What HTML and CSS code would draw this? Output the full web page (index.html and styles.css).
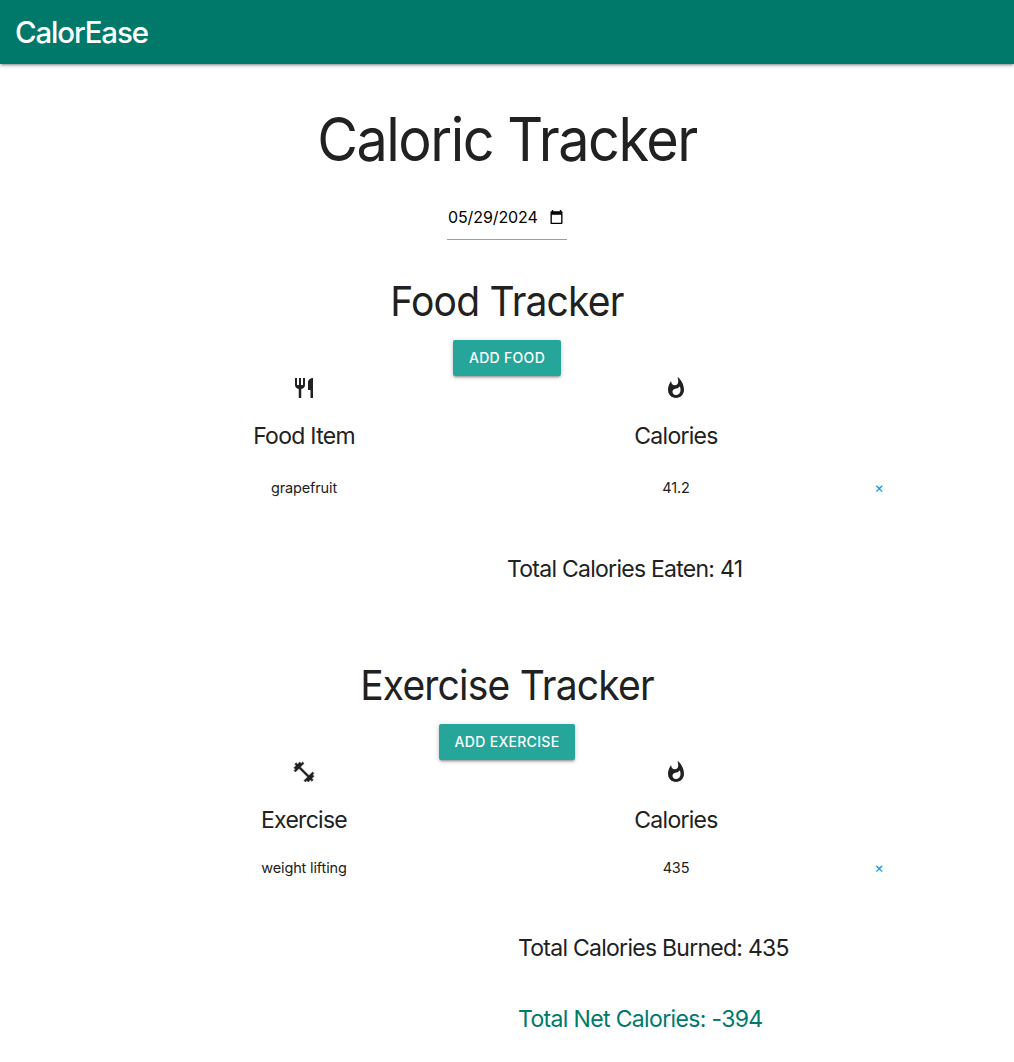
FILE: index.html
```html
<!DOCTYPE html>
<html lang="en">
<head>
<meta charset="utf-8">
<title>CalorEase</title>
<link rel="stylesheet" href="styles.css">
</head>
<body>
<nav class="navbar"><a class="brand">CalorEase</a></nav>
<main class="container">
  <h1 class="title">Caloric Tracker</h1>
  <div class="date"><span>05/29/2024</span>
    <svg class="calendar" viewBox="3 1 18 21"><path fill="currentColor" d="M20 3h-1V1h-2v2H7V1H5v2H4c-.6 0-1 .4-1 1v17c0 .6.4 1 1 1h16c.6 0 1-.4 1-1V4c0-.6-.4-1-1-1zm-1 17H5V8h14v12z"/></svg>
  </div>
  <section class="tracker">
    <h2 class="heading">Food Tracker</h2>
    <button class="btn">ADD FOOD</button>
    <div class="row">
      <div><svg class="icon" viewBox="0 0 24 24"><path fill="currentColor" d="M11 9H9V2H7v7H5V2H3v7c0 2.120 1.660 3.840 3.750 3.970V22h2.500v-9.030C11.340 12.840 13 11.120 13 9V2h-2v7zm5-3v8h2.500v8H21V2c-2.760 0-5 2.240-5 4z"/></svg><h3 class="label">Food Item</h3></div>
      <div><svg class="icon" viewBox="0 0 24 24"><path fill="currentColor" d="M13.500.67s.74 2.650.74 4.800c0 2.060-1.350 3.730-3.410 3.730-2.070 0-3.630-1.670-3.630-3.730l.03-.36C5.210 7.510 4 10.620 4 14c0 4.420 3.580 8 8 8s8-3.580 8-8C20 8.610 17.410 3.800 13.500.67zM11.710 19c-1.780 0-3.220-1.400-3.220-3.140 0-1.620 1.050-2.760 2.810-3.120 1.770-.36 3.600-1.210 4.620-2.580.39 1.290.59 2.650.59 4.040 0 2.650-2.150 4.800-4.800 4.800z"/></svg><h3 class="label">Calories</h3></div>
    </div>
    <div class="row entry food-entry">
      <div>grapefruit</div><div>41.2</div><a class="remove">×</a>
    </div>
    <p class="total eaten">Total Calories Eaten: 41</p>
  </section>
  <section class="tracker exercise">
    <h2 class="heading">Exercise Tracker</h2>
    <button class="btn btn-wide">ADD EXERCISE</button>
    <div class="row">
      <div><svg class="icon" viewBox="0 0 24 24"><path fill="currentColor" stroke="currentColor" stroke-width=".5" d="M20.570 14.860 22 13.430 20.570 12 17 15.570 8.430 7 12 3.430 10.570 2 9.140 3.430 7.710 2 5.570 4.140 4.140 2.710 2.710 4.140l1.430 1.430L2 7.710l1.430 1.430L2 10.570 3.430 12 7 8.430 15.570 17 12 20.570 13.430 22l1.430-1.430L16.290 22l2.140-2.140 1.430 1.430 1.430-1.430-1.430-1.430L22 16.290z"/></svg><h3 class="label">Exercise</h3></div>
      <div><svg class="icon" viewBox="0 0 24 24"><path fill="currentColor" d="M13.500.67s.74 2.650.74 4.800c0 2.060-1.350 3.730-3.410 3.730-2.070 0-3.630-1.670-3.630-3.730l.03-.36C5.210 7.510 4 10.620 4 14c0 4.420 3.580 8 8 8s8-3.580 8-8C20 8.610 17.410 3.800 13.500.67zM11.710 19c-1.780 0-3.220-1.400-3.220-3.140 0-1.620 1.050-2.760 2.810-3.120 1.770-.36 3.600-1.210 4.620-2.580.39 1.290.59 2.650.59 4.040 0 2.650-2.150 4.800-4.800 4.800z"/></svg><h3 class="label">Calories</h3></div>
    </div>
    <div class="row entry exercise-entry">
      <div>weight lifting</div><div>435</div><a class="remove">×</a>
    </div>
    <p class="total burned">Total Calories Burned: 435</p>
    <p class="total net">Total Net Calories: -394</p>
  </section>
</main>
</body>
</html>
```
FILE: styles.css
```css
* { box-sizing: border-box; }
body { margin: 0; background: #fff; color: #212121; font-family: Inter, sans-serif; }
.navbar { height: 64px; padding: 1px 0 0 15px; background: #00796b; color: #fff; box-shadow: 0 2px 2px rgba(0,0,0,.14), 0 3px 1px -2px rgba(0,0,0,.12), 0 1px 5px rgba(0,0,0,.2); }
.brand { display: block; font-size: 29.4px; font-weight: 500; line-height: 64px; letter-spacing: -1.1px; }
.title { margin: 41px 0 0; font-size: 60px; font-weight: 430; line-height: 68px; letter-spacing: -1.6px; text-align: center; transform: scaleX(.93); }
.date { display: flex; align-items: center; justify-content: space-between; width: 120px; height: 45px; margin: 22px auto 0; padding: 0 4px 0 1px; border-bottom: 1px solid #9e9e9e; color: #000; font-size: 16px; letter-spacing: -.1px; }
.calendar { width: 13px; height: 14px; }
.tracker { height: 384px; padding-top: 38px; }
.exercise { height: auto; padding-bottom: 30px; }
.heading { margin: 0; font-size: 41.5px; font-weight: 430; line-height: 47px; letter-spacing: -.85px; text-align: center; transform: scaleX(.94); }
.btn { display: block; width: 108px; height: 36px; margin: 15px auto 0; padding: 0; border: 0; border-radius: 2px; background: #26a69a; color: #fff; font: 500 14px/36px Inter, sans-serif; letter-spacing: .3px; box-shadow: 0 2px 2px rgba(0,0,0,.14), 0 3px 1px -2px rgba(0,0,0,.12), 0 1px 5px rgba(0,0,0,.2); }
.btn-wide { width: 136px; }
.row { display: grid; grid-template-columns: 372px 372px 34px; padding-left: 118px; text-align: center; }
.icon { display: block; width: 24px; height: 24px; margin: 0 auto; }
.label { margin: 22px 0 0; font-size: 23px; font-weight: 400; line-height: 28px; letter-spacing: -.72px; }
.entry { font-size: 14.5px; line-height: 20px; letter-spacing: -.15px; }
.food-entry { margin-top: 28px; }
.exercise-entry { margin-top: 24px; }
.remove { color: #039be5; }
.total { margin: 0; font-size: 23px; line-height: 28px; letter-spacing: -.74px; }
.eaten { margin: 57px 0 0 507px; }
.burned { margin: 56px 0 0 518px; }
.net { margin: 43px 0 0 518px; color: #00796b; letter-spacing: -.65px; }
```
